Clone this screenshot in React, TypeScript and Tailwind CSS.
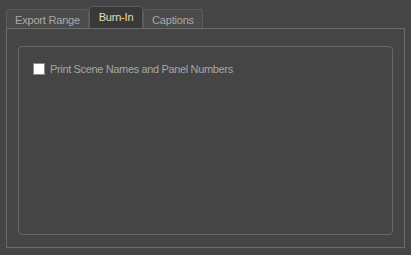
export default function App() {
  return (
    <div
      className="w-[411px] h-[255px] bg-[#454545] pt-[6px] px-[6px]"
      style={{ fontFamily: "'Liberation Sans', Arial, sans-serif" }}
    >
      <div className="flex items-end h-[22px] text-[11px] tracking-[-0.2px]">
        <div className="h-[19px] w-[83px] pt-[2px] flex items-center justify-center rounded-t-[3px] border border-b-0 border-[#5c5c5c] bg-[#4b4b4b] text-[#a9a9a9]">
          Export Range
        </div>
        <div className="h-[22px] w-[54px] flex items-center justify-center rounded-t-[3px] border border-b-0 border-[#5c5c5c] bg-[#393939] text-[#e6dfb8]">
          Burn-In
        </div>
        <div className="h-[19px] w-[60px] pt-[2px] flex items-center justify-center rounded-t-[3px] border border-b-0 border-[#5c5c5c] bg-[#4b4b4b] text-[#a9a9a9]">
          Captions
        </div>
      </div>
      <div className="w-[399px] h-[220px] border border-[#6c6c6c] pt-[17px] pl-[11px]">
        <div className="w-[375px] h-[189px] border border-[#676767] rounded-[4px] pt-[16px] pl-[14px]">
          <label className="flex items-center gap-[5px] text-[11px] tracking-[-0.35px] leading-[12px] text-[#a6a6a6]">
            <span className="w-[12px] h-[12px] bg-white border border-[#8a8a8a]" />
            Print Scene Names and Panel Numbers
          </label>
        </div>
      </div>
    </div>
  );
}
